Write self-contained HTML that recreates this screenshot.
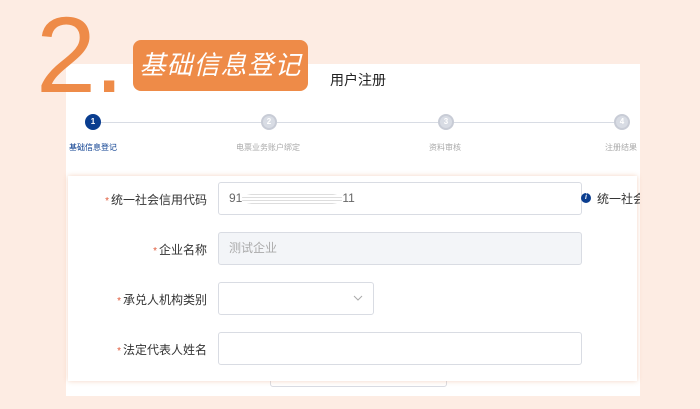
<!DOCTYPE html>
<html><head><meta charset="utf-8"><style>
*{margin:0;padding:0;box-sizing:border-box}
body{width:700px;height:409px;overflow:hidden;background:#fdece3;position:relative;font-family:"Liberation Sans","Noto Sans CJK SC",sans-serif}
.abs{position:absolute}
.panel{left:66px;top:64px;width:574px;height:332px;background:#fff;overflow:hidden}
.two{left:36px;top:1px;font-size:108px;line-height:108px;color:#ee8b48;font-family:"Liberation Sans",sans-serif;font-weight:400;letter-spacing:-2px}
.badge{left:133px;top:40px;width:175px;height:51px;background:#ee8b48;border-radius:8px;color:#fff;font-size:26px;line-height:51px;text-align:center;font-style:italic;letter-spacing:1px}
.title{left:330px;top:70px;font-size:14px;color:#222}
.line{height:1px;background:#d8dce4;top:122px}
.c{width:16px;height:16px;border-radius:50%;background:#d8dce4;border:2px solid #c8ccd6;color:#fff;font-size:8px;text-align:center;line-height:12px;font-weight:bold}
.c.on{background:#0a3d8f;border-color:#0a3d8f}
.sl{font-size:8px;color:#aaa;top:142px}
.card{left:68px;top:176px;width:569px;height:205px;background:#fff;box-shadow:0 0 5px rgba(230,160,120,.45)}
.lab{font-size:12px;color:#333;text-align:right;width:150px;left:57px}
.lab b{color:#e05a3a;font-weight:normal;font-size:10px;margin-right:2px}
.in{border:1px solid #d9dce3;border-radius:3px;height:33px;background:#fff;font-size:12px;color:#666;line-height:31px;padding-left:10px}
</style></head><body>
<div class="abs panel"></div>
<div class="abs two">2.</div>
<div class="abs badge">基础信息登记</div>
<div class="abs title">用户注册</div>
<div class="abs line" style="left:100px;width:530px"></div>
<div class="abs c on" style="left:85px;top:114px">1</div>
<div class="abs c" style="left:261px;top:114px">2</div>
<div class="abs c" style="left:438px;top:114px">3</div>
<div class="abs c" style="left:614px;top:114px">4</div>
<div class="abs sl" style="left:69px;color:#0a3d8f">基础信息登记</div>
<div class="abs sl" style="left:236px">电票业务账户绑定</div>
<div class="abs sl" style="left:429px">资料审核</div>
<div class="abs sl" style="left:605px;width:35px;overflow:hidden;white-space:nowrap">注册结果</div>
<div class="abs in" style="left:270px;top:372px;width:177px;height:15px"></div>
<div class="abs card"></div>
<div class="abs lab" style="top:191px"><b>*</b>统一社会信用代码</div>
<div class="abs in" style="left:218px;top:182px;width:364px">91<span style="display:inline-block;width:100px;height:14px;vertical-align:middle;background:repeating-linear-gradient(0deg,#fff 0 2px,#ddd 2px 3px);border-radius:40%"></span>11</div>
<div class="abs" style="left:581px;top:193px;width:10px;height:10px;border-radius:50%;background:#0a3d8f;color:#fff;font-size:7px;text-align:center;line-height:10px;font-style:italic;font-weight:bold">i</div>
<div class="abs" style="left:597px;top:190px;font-size:12px;color:#333;width:43px;overflow:hidden;white-space:nowrap">统一社会</div>
<div class="abs lab" style="top:241px"><b>*</b>企业名称</div>
<div class="abs in" style="left:218px;top:232px;width:364px;background:#f3f5f8;color:#aaa">测试企业</div>
<div class="abs lab" style="top:291px"><b>*</b>承兑人机构类别</div>
<div class="abs in" style="left:218px;top:282px;width:156px"><svg style="position:absolute;right:10px;top:12px" width="10" height="6" viewBox="0 0 10 6"><path d="M1 1L5 5L9 1" fill="none" stroke="#aaa" stroke-width="1"/></svg></div>
<div class="abs lab" style="top:341px"><b>*</b>法定代表人姓名</div>
<div class="abs in" style="left:218px;top:332px;width:364px"></div>
</body></html>
